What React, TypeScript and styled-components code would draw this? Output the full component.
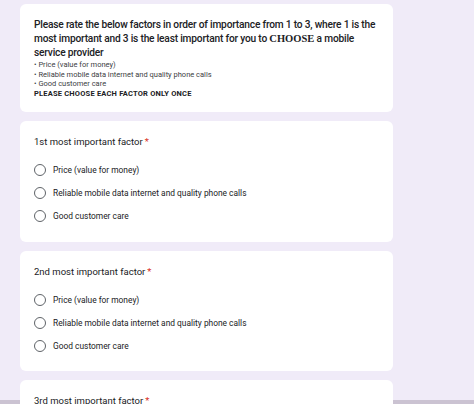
import styled, { createGlobalStyle } from 'styled-components';

const GlobalStyle = createGlobalStyle`
  html, body {
    margin: 0;
    padding: 0;
    background: #f0ebf8;
    font-family: Roboto, "Liberation Sans", Arial, sans-serif;
    color: #202124;
  }
`;

const Page = styled.div`
  width: 474px;
  height: 404px;
  overflow: hidden;
  box-sizing: border-box;
  padding: 4px 0 0 20px;
  background: #f0ebf8;
  box-shadow: inset 0 -4px 0 #cbc3d2;
`;

const Column = styled.div`
  width: 373px;
  display: flex;
  flex-direction: column;
  gap: 9px;
`;

const Card = styled.div`
  background: #fff;
  border-radius: 6px;
  padding: 14px 14px 14px;
  box-sizing: border-box;
`;

const Heading = styled.div`
  font-size: 10.2px;
  line-height: 14px;
  font-weight: 500;
  letter-spacing: -0.2px;
  white-space: nowrap;
`;

const Caps = styled.span`
  font-family: "Liberation Serif", "Times New Roman", serif;
  font-weight: 700;
  font-size: 10.5px;
  letter-spacing: 0;
`;

const Small = styled.div`
  font-size: 7.5px;
  line-height: 9.5px;
  color: #3c4043;
  white-space: nowrap;
`;

const Notice = styled(Small)`
  font-weight: 700;
  color: #202124;
  letter-spacing: 0.2px;
`;

const Title = styled.div`
  font-size: 9.5px;
  line-height: 14px;
  margin-bottom: 9.5px;
`;

const Star = styled.span`
  color: #d93025;
  margin-left: 2px;
`;

const Option = styled.label`
  display: flex;
  align-items: center;
  height: 23px;
  font-size: 8.4px;
  color: #202124;
`;

const Radio = styled.span`
  width: 12px;
  height: 12px;
  box-sizing: border-box;
  border: 1.5px solid #5f6368;
  border-radius: 50%;
  margin-right: 7px;
  flex: none;
`;

const options = [
  'Price (value for money)',
  'Reliable mobile data internet and quality phone calls',
  'Good customer care',
];

function Question({ title }: { title: string }) {
  return (
    <Card>
      <Title>
        {title}
        <Star>*</Star>
      </Title>
      {options.map((o) => (
        <Option key={o}>
          <Radio />
          {o}
        </Option>
      ))}
    </Card>
  );
}

export default function App() {
  return (
    <Page>
      <GlobalStyle />
      <Column>
        <Card>
          <Heading>
            Please rate the below factors in order of importance from 1 to 3, where 1 is the
            <br />
            most important and 3 is the least important for you to <Caps>CHOOSE</Caps> a mobile
            <br />
            service provider
          </Heading>
          <Small>• Price (value for money)</Small>
          <Small>• Reliable mobile data internet and quality phone calls</Small>
          <Small>• Good customer care</Small>
          <Notice>PLEASE CHOOSE EACH FACTOR ONLY ONCE</Notice>
        </Card>
        <Question title="1st most important factor" />
        <Question title="2nd most important factor" />
        <Question title="3rd most important factor" />
      </Column>
    </Page>
  );
}
